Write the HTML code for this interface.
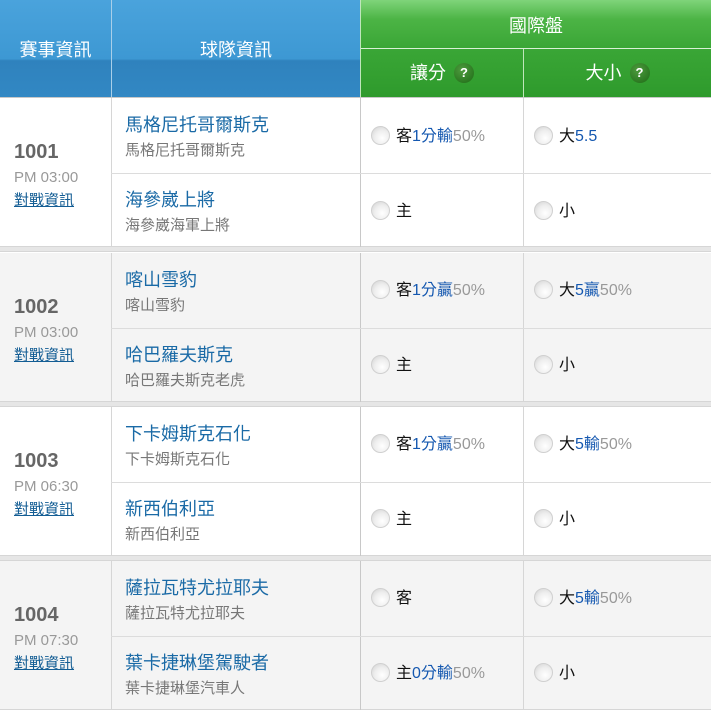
<!DOCTYPE html>
<html><head><meta charset="utf-8"><style>
*{margin:0;padding:0;box-sizing:border-box}
body{width:711px;height:710px;overflow:hidden;background:#fff;font-family:"Liberation Sans","Noto Sans CJK TC",sans-serif;position:relative}
.a{position:absolute}
.hb{background:linear-gradient(#4aa3dc,#3d98d3 60%,#2f82bd 62%,#3288c4);color:#fff;font-size:18px;text-align:center;line-height:100px;top:0;height:98px}
.hg{background:linear-gradient(#7fd47a,#4cb445 40%,#3aa636);color:#fff;font-size:18px;text-align:center}
.hg2{background:linear-gradient(#3aa636,#2e9a2c);color:#fff;font-size:18px;text-align:center;line-height:49px;top:49px;height:49px}
.q{display:inline-block;width:20px;height:20px;border-radius:50%;background:radial-gradient(circle at 40% 35%,#4e9b3e,#1d6a15);color:#fff;font-size:13px;font-weight:bold;line-height:20px;vertical-align:2px;margin-left:8px}
.g{position:absolute;left:0;width:711px;height:149px;border-bottom:1px solid #d6d6d6}
.band{position:absolute;left:0;width:711px;height:5px;background:#e6e6e6;border-bottom:1px solid #d6d6d6}
.vl{position:absolute;top:0;height:149px;width:1px;background:#d6d6d6}
.hl{position:absolute;left:111px;width:600px;top:75px;height:1px;background:#dcdcdc}
.num{position:absolute;left:14px;top:43px;font-size:20px;font-weight:bold;color:#666}
.tm{position:absolute;left:14px;top:71px;font-size:15px;color:#999}
.lk{position:absolute;left:14px;top:91px;font-size:15px;color:#135d94;text-decoration:underline}
.tn{position:absolute;left:125px;font-size:18px;color:#1a6aa6}
.ts{position:absolute;left:125px;font-size:15px;color:#777}
.r{position:absolute;width:19px;height:19px;border-radius:50%;background:radial-gradient(circle at 60% 65%,#fff,#eee 50%,#cfcfcf);border:1px solid #d0d0d0}
.o{position:absolute;font-size:16px;color:#111}
.b{color:#1558b0}.p{color:#999}
</style></head><body>
<div class="a hb" style="left:0;width:111px">賽事資訊</div>
<div class="a hb" style="left:112px;width:248px">球隊資訊</div>
<div class="a hg" style="left:361px;width:350px;top:0;height:48px;line-height:52px">國際盤</div>
<div class="a" style="left:361px;top:48px;width:350px;height:1px;background:#d9f0d6"></div>
<div class="a hg2" style="left:361px;width:162px">讓分<span class="q">?</span></div>
<div class="a" style="left:523px;top:49px;width:1px;height:49px;background:#bfe6bb"></div>
<div class="a hg2" style="left:524px;width:187px">大小<span class="q">?</span></div>
<div class="a" style="left:111px;top:0;width:1px;height:98px;background:#a9cfe9"></div>
<div class="a" style="left:360px;top:0;width:1px;height:98px;background:#bfe6bb"></div>
<div class="a" style="left:0;top:97px;width:711px;height:1px;background:#c8c8c8"></div>

<!-- group 1 -->
<div class="g" style="top:98px;background:#fff">
<div class="vl" style="left:111px"></div><div class="vl" style="left:360px;background:#c8c8c8"></div><div class="vl" style="left:523px"></div><div class="hl"></div>
<div class="num">1001</div><div class="tm">PM 03:00</div><div class="lk">對戰資訊</div>
<div class="tn" style="top:13px">馬格尼托哥爾斯克</div><div class="ts" style="top:41px">馬格尼托哥爾斯克</div>
<div class="tn" style="top:88px">海參崴上將</div><div class="ts" style="top:116px">海參崴海軍上將</div>
<div class="r" style="left:371px;top:28px"></div><div class="o" style="left:396px;top:24px">客<span class="b">1分輸</span><span class="p">50%</span></div>
<div class="r" style="left:534px;top:28px"></div><div class="o" style="left:559px;top:24px">大<span class="b">5.5</span></div>
<div class="r" style="left:371px;top:103px"></div><div class="o" style="left:396px;top:99px">主</div>
<div class="r" style="left:534px;top:103px"></div><div class="o" style="left:559px;top:99px">小</div>
</div>
<div class="band" style="top:247px"></div>

<!-- group 2 -->
<div class="g" style="top:253px;background:#f4f4f4">
<div class="vl" style="left:111px"></div><div class="vl" style="left:360px;background:#c8c8c8"></div><div class="vl" style="left:523px"></div><div class="hl"></div>
<div class="num">1002</div><div class="tm">PM 03:00</div><div class="lk">對戰資訊</div>
<div class="tn" style="top:13px">喀山雪豹</div><div class="ts" style="top:41px">喀山雪豹</div>
<div class="tn" style="top:88px">哈巴羅夫斯克</div><div class="ts" style="top:116px">哈巴羅夫斯克老虎</div>
<div class="r" style="left:371px;top:27px"></div><div class="o" style="left:396px;top:23px">客<span class="b">1分贏</span><span class="p">50%</span></div>
<div class="r" style="left:534px;top:27px"></div><div class="o" style="left:559px;top:23px">大<span class="b">5贏</span><span class="p">50%</span></div>
<div class="r" style="left:371px;top:102px"></div><div class="o" style="left:396px;top:98px">主</div>
<div class="r" style="left:534px;top:102px"></div><div class="o" style="left:559px;top:98px">小</div>
</div>
<div class="band" style="top:402px"></div>

<!-- group 3 -->
<div class="g" style="top:407px;background:#fff">
<div class="vl" style="left:111px"></div><div class="vl" style="left:360px;background:#c8c8c8"></div><div class="vl" style="left:523px"></div><div class="hl"></div>
<div class="num">1003</div><div class="tm">PM 06:30</div><div class="lk">對戰資訊</div>
<div class="tn" style="top:13px">下卡姆斯克石化</div><div class="ts" style="top:41px">下卡姆斯克石化</div>
<div class="tn" style="top:88px">新西伯利亞</div><div class="ts" style="top:116px">新西伯利亞</div>
<div class="r" style="left:371px;top:27px"></div><div class="o" style="left:396px;top:23px">客<span class="b">1分贏</span><span class="p">50%</span></div>
<div class="r" style="left:534px;top:27px"></div><div class="o" style="left:559px;top:23px">大<span class="b">5輸</span><span class="p">50%</span></div>
<div class="r" style="left:371px;top:102px"></div><div class="o" style="left:396px;top:98px">主</div>
<div class="r" style="left:534px;top:102px"></div><div class="o" style="left:559px;top:98px">小</div>
</div>
<div class="band" style="top:556px"></div>

<!-- group 4 -->
<div class="g" style="top:561px;background:#f4f4f4">
<div class="vl" style="left:111px"></div><div class="vl" style="left:360px;background:#c8c8c8"></div><div class="vl" style="left:523px"></div><div class="hl"></div>
<div class="num">1004</div><div class="tm">PM 07:30</div><div class="lk">對戰資訊</div>
<div class="tn" style="top:13px">薩拉瓦特尤拉耶夫</div><div class="ts" style="top:41px">薩拉瓦特尤拉耶夫</div>
<div class="tn" style="top:88px">葉卡捷琳堡駕駛者</div><div class="ts" style="top:116px">葉卡捷琳堡汽車人</div>
<div class="r" style="left:371px;top:27px"></div><div class="o" style="left:396px;top:23px">客</div>
<div class="r" style="left:534px;top:27px"></div><div class="o" style="left:559px;top:23px">大<span class="b">5輸</span><span class="p">50%</span></div>
<div class="r" style="left:371px;top:102px"></div><div class="o" style="left:396px;top:98px">主<span class="b">0分輸</span><span class="p">50%</span></div>
<div class="r" style="left:534px;top:102px"></div><div class="o" style="left:559px;top:98px">小</div>
</div>
</body></html>
